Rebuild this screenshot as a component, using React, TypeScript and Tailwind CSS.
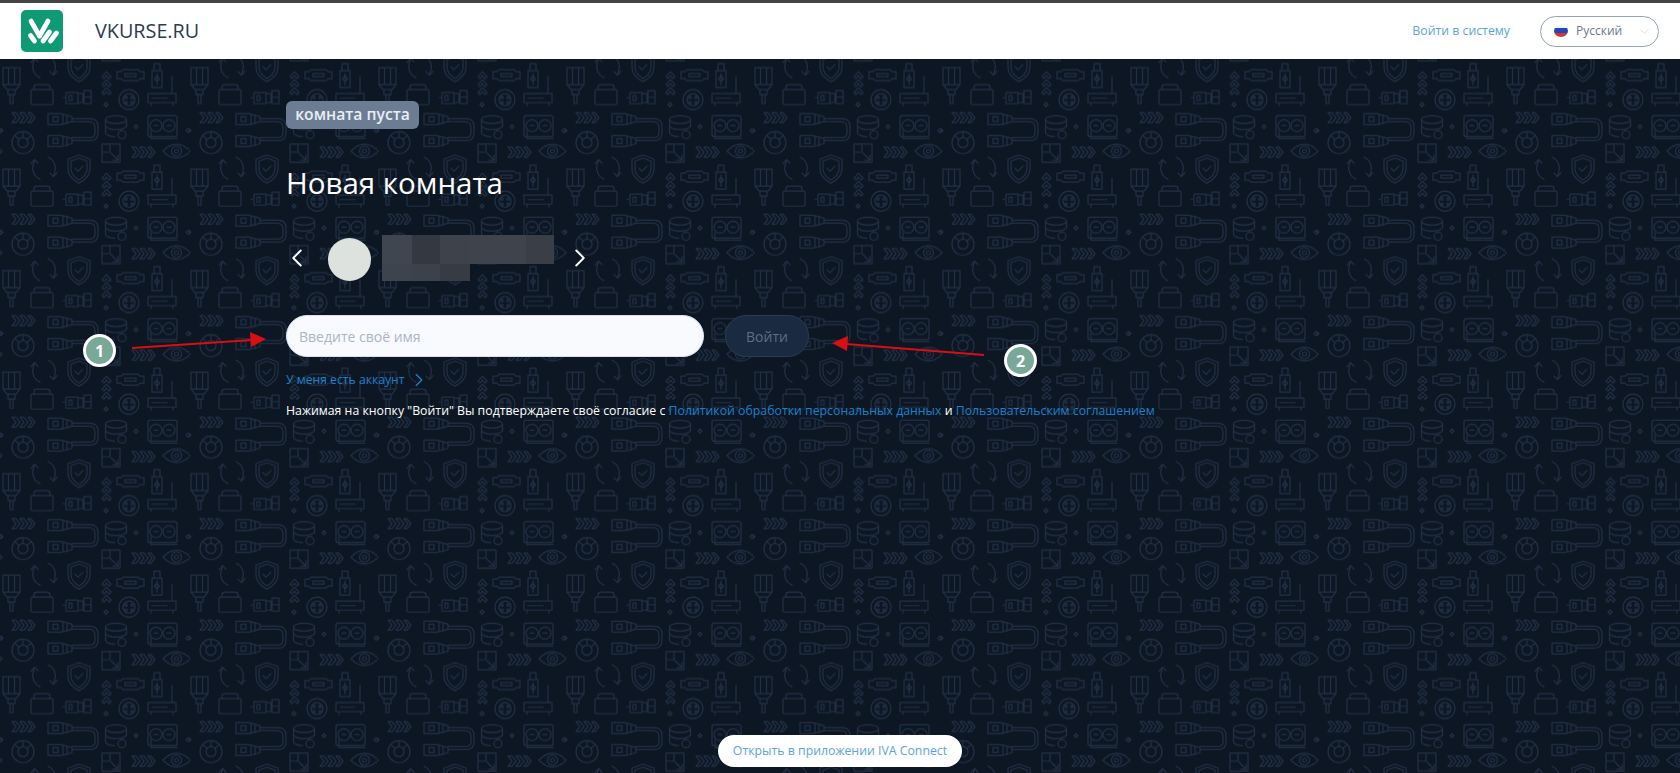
import React from 'react';
import { ChevronLeft, ChevronRight, ChevronDown } from 'lucide-react';

const font = { fontFamily: '"Open Sans", "Noto Sans", sans-serif' };

// one tile of the wallpaper, 188 x 101.5
const TileIcons = () => (
  <g fill="none" stroke="#212f44" strokeWidth="1.200" strokeLinejoin="round" strokeLinecap="round">
    {/* plug */}
    <path d="M3 17h17v17l-4 5H7l-4-5z M8.500 17v17 M14.500 17v17 M3 34h17 M8 39v5h7v-5 M10 44v9h3v-9" />
    {/* refresh */}
    <path d="M48 5a12 12 0 0 1 7 14l-1.500 5 M40 27a12 12 0 0 1-7-14l1.500-5" />
    <path d="M50 21l3.500 3.500 3.500-4 M38 11l-3.500-3.500-3.500 4" />
    {/* shield */}
    <path d="M79 3l11 4v10c0 7-5 11-11 14-6-3-11-7-11-14V7z" />
    <path d="M79 6l8 3v8c0 5-4 8-8 11-4-3-8-6-8-11V9z" />
    <path d="M75 16l3 3 5-5" />
    {/* box */}
    <rect x="31" y="39" width="22" height="15" rx="1.500" />
    <path d="M34 39v-2.500c0-1.500 1-2.500 3-2.500h10c2 0 3 1 3 2.500V39" />
    {/* usb side */}
    <path d="M63 47h3v-5h12v11H66v-5 M78 43h5v9h-5 M84 40h7v13h-7z M84 46.500h7 M69 45h3v5h-3z" />
    {/* chevrons up */}
    <path d="M102 26l4.500-5 4.500 5-2 2-2.500-3-2.500 3z M102 34l4.500-5 4.500 5-2 2-2.500-3-2.500 3z M102 42l4.500-5 4.500 5-2 2-2.500-3-2.500 3z" />
    {/* vga connector */}
    <path d="M123 19h15l2 2h4v7h-4l-2 2h-15l-2-2h-4v-7h4z M125 23h11v3h-11z" />
    {/* stick */}
    <path d="M154 13h6v7h-6z M152 20h10v17h-10z M157 23v11 M154.500 28l2.500-3 2.500 3-2.500 3z" />
    {/* router */}
    <path d="M148 43h28v9h-28z M172 43V26 M151 52v3 M173 52v3 M152 47.500h15" />
    {/* fan */}
    <circle cx="129" cy="49" r="10" />
    <circle cx="129" cy="49" r="6" />
    <path d="M125 46h2v2h-2z M131 46h2v2h-2z M125 51h2v2h-2z M131 51h2v2h-2z" />
    {/* sparks */}
    <path d="M106 52l2 2-2 2-2-2z M136 74l2 2-2 2-2-2z M188 78l2 2-2 2-2-2z M1 78l2 2-2 2-2-2z" />
    {/* right chevrons */}
    <path d="M12 62l4 5-4 5h4l4-5-4-5z M20 62l4 5-4 5h4l4-5-4-5z M28 62l4 5-4 5h3l4-5-4-5z" />
    {/* patch cable */}
    <path d="M48 63h13l11 3v5l-11 3H48z M48 85h13l11 3v5l-11 3H48z M72 68h18c5 0 8 3 8 8v6c0 5-3 8-8 8H72 M72 71h17c4 0 6 2 6 6v5c0 3-2 5-6 5H72" />
    <path d="M53 66h5v5h-5z M53 88h5v5h-5z M63 64v9 M67 65v8 M63 86v9 M67 87v8" />
    {/* database */}
    <ellipse cx="116" cy="69" rx="10.500" ry="4" />
    <path d="M105.500 69v13c0 2 4 4 9 4 M126.500 69v7 M105.500 75c0 2 4 4 10.500 4s10.500-2 10.500-4" />
    <circle cx="122" cy="84" r="4" />
    {/* outlet */}
    <rect x="148" y="65" width="29" height="21" rx="2" />
    <circle cx="156" cy="75" r="6" />
    <circle cx="169" cy="75" r="6" />
    <path d="M154 75h4 M167 75h4 M151 80v8h26" />
    {/* disk */}
    <circle cx="23" cy="92" r="11" />
    <circle cx="23" cy="92" r="5" />
    <path d="M23 81v6 M15 85l4 4 M31 85l-4 4" />
    {/* resize square */}
    <path d="M102 -8h18v18h-18z M102 -8h8v8h-8z M111 1l7 7 M118 3v5h-5" />
    <path d="M132 -5l4 5-4 5h4l4-5-4-5z M140 -5l4 5-4 5h4l4-5-4-5z M148 -5l4 5-4 5h3l4-5-4-5z" />
    {/* eye */}
    <path d="M163 -1c8-9 19-9 27 0-8 9-19 9-27 0z" />
    <circle cx="176.500" cy="-1" r="5" />
    <circle cx="176.500" cy="-1" r="2" />
  </g>
);

const WallPaper = () => (
  <svg className="absolute inset-0 h-full w-full">
    <defs>
      <pattern id="tile" patternUnits="userSpaceOnUse" x="0" y="397.670" width="188" height="101.500">
        <g><TileIcons /></g>
        <g transform="translate(0 101.500)"><TileIcons /></g>
        <g transform="translate(0 -101.500)"><TileIcons /></g>
        <g transform="translate(-188 0)"><TileIcons /></g>
        <g transform="translate(-188 101.500)"><TileIcons /></g>
      </pattern>
    </defs>
    <rect width="100%" height="100%" fill="url(#tile)" />
  </svg>
);

const Logo = () => (
  <svg width="42" height="42" viewBox="0 0 42 42" className="shrink-0">
    <rect width="42" height="42" rx="5" fill="#0f9a76" />
    <g stroke="#fff" strokeWidth="4.800" strokeLinecap="round" fill="none">
      <path d="M10 11L18.500 26" />
      <path d="M18.500 26L27 11" />
      <path d="M9.500 25.500l4 5.500" />
      <path d="M22 31l6.500-9" />
      <path d="M29.500 31l6-8" />
    </g>
  </svg>
);

const FlagRu = () => (
  <svg width="14" height="12" viewBox="0 0 14 12" className="shrink-0">
    <clipPath id="flag"><ellipse cx="7" cy="6" rx="7" ry="6" /></clipPath>
    <g clipPath="url(#flag)">
      <rect width="14" height="4" fill="#f3f4f6" />
      <rect y="3" width="14" height="5" fill="#2347b8" />
      <rect y="8" width="14" height="4" fill="#d9342b" />
    </g>
  </svg>
);

const Badge = ({ n, className }: { n: number; className: string }) => (
  <div className={`absolute flex h-[33px] w-[33px] items-center justify-center rounded-full border-[3px] border-white bg-[#7aa898] text-[16px] font-bold text-white ${className}`}>
    {n}
  </div>
);

export default function App() {
  return (
    <div className="relative flex h-screen flex-col overflow-hidden bg-[#0d1724]" style={font}>
      <header className="relative z-10 flex h-[59px] shrink-0 items-center border-t-[3px] border-[#444] bg-white pl-[21px] pr-[21px]">
        <Logo />
        <span className="ml-[32px] text-[19.8px] text-[#2d3a4f]">VKURSE.RU</span>
        <a className="ml-auto text-[12.3px] text-[#5aa5d8]">Войти в систему</a>
        <div className="ml-[30px] flex h-[31px] w-[119px] items-center rounded-full border border-[#93a3b3] pl-[13px]">
          <FlagRu />
          <span className="ml-[8px] text-[12px] text-[#6c7a8a]">Русский</span>
          <ChevronDown size={15} strokeWidth={1} className="ml-[15px] text-[#c4d0dc]" />
        </div>
      </header>

      <main className="relative flex-1 pl-[286px] pt-[42px]">
        <WallPaper />
        <div className="relative">
          <span className="inline-flex h-[28px] w-[133px] items-center justify-center rounded-md bg-[#6b7c93] text-[15.7px] font-semibold text-[#e9eef4]">
            комната пуста
          </span>
          <h1 className="mt-[35px] text-[29.5px] font-medium leading-[38px] text-white">Новая комната</h1>

          <div className="mt-[30px] flex h-[51px] items-center">
            <ChevronLeft size={30} strokeWidth={1.500} className="ml-[-4px] text-white" />
            <div className="ml-[16px] mt-[4px] h-[43px] w-[43px] rounded-full bg-[#dde2df]" />
            <div className="ml-[11px] grid h-[46px] w-[172px] grid-cols-[30px_28px_30px_56px_28px] grid-rows-[29px_17px]">
              <div className="bg-[#3f4650]" />
              <div className="bg-[#343841]" />
              <div className="bg-[#3d424b]" />
              <div className="bg-[#3e434c]" />
              <div className="bg-[#393e47]" />
              <div className="bg-[#3d444d]" />
              <div className="bg-[#3c424b]" />
              <div className="bg-[#373b44]" />
            </div>
            <ChevronRight size={30} strokeWidth={1.500} className="ml-[11px] text-white" />
          </div>

          <div className="mt-[32px] flex items-center">
            <input
              readOnly
              placeholder="Введите своё имя"
              className="h-[42px] w-[418px] rounded-full border border-[#d5e3f0] bg-[#f8fafd] px-[12px] text-[14px] outline-none placeholder:text-[#a9b6c4]"
            />
            <button className="ml-[21px] h-[42px] w-[84px] rounded-full border border-[#2a3c52] bg-[#1a2a40] text-[14px] text-[#5d6e84]">
              Войти
            </button>
          </div>

          <a className="mt-[14px] flex h-[18px] items-center text-[12.2px] leading-[18px] text-[#1b80cc]">
            У меня есть аккаунт
            <ChevronRight size={22} strokeWidth={1.500} className="ml-[3px]" />
          </a>
          <p className="mt-[13px] text-[12.3px] leading-[18px] text-white">
            Нажимая на кнопку "Войти" Вы подтверждаете своё согласие с{' '}
            <a className="text-[#1b80cc]">Политикой обработки персональных данных</a> и{' '}
            <a className="text-[#1b80cc]">Пользовательским соглашением</a>
          </p>
        </div>

        <button className="absolute bottom-[6px] left-[718px] h-[32px] w-[244px] rounded-full bg-white text-[12.3px] text-[#5aa5d8]">
          Открыть в приложении IVA Connect
        </button>
      </main>

      {/* red arrows and numbers drawn over the shot */}
      <svg className="pointer-events-none absolute inset-0 z-20 h-full w-full">
        <path d="M132 348L252 340" stroke="#d90f12" strokeWidth="2" />
        <path d="M266 339L250 332L251 347z" fill="#d90f12" />
        <path d="M984 355L846 344" stroke="#d90f12" strokeWidth="2" />
        <path d="M832 343L848 336L847 351z" fill="#d90f12" />
      </svg>
      <Badge n={1} className="left-[83px] top-[334px] z-20" />
      <Badge n={2} className="left-[1004px] top-[344px] z-20" />
    </div>
  );
}
